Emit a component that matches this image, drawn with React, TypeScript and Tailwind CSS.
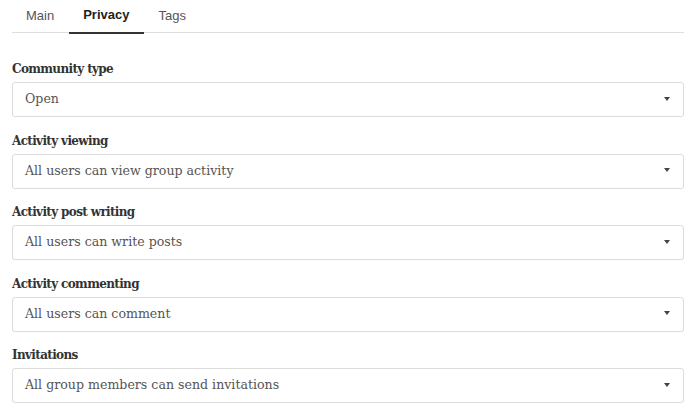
import React from "react";

const serif = { fontFamily: '"DejaVu Serif", "Liberation Serif", serif' };

const fields = [
  { label: "Community type", value: "Open" },
  { label: "Activity viewing", value: "All users can view group activity" },
  { label: "Activity post writing", value: "All users can write posts" },
  { label: "Activity commenting", value: "All users can comment" },
  { label: "Invitations", value: "All group members can send invitations" },
];

export default function App() {
  return (
    <div className="w-[697px] h-[412px] bg-white pl-3 pr-[13px] overflow-hidden">
      <div
        className="flex h-[33px] border-b border-[#dedede] text-[13px]"
        style={{ fontFamily: '"Liberation Sans", Arial, sans-serif' }}
      >
        <div className="h-[32px] pl-[14px] pr-[15px] flex items-center text-[#555]">Main</div>
        <div className="h-[34px] -mb-[2px] pl-[14px] pr-[15px] flex items-center pb-[2px] font-bold text-[#222] border-b-2 border-[#333]">
          Privacy
        </div>
        <div className="h-[32px] pl-[14px] pr-[15px] flex items-center text-[#555]">Tags</div>
      </div>
      <div className="pt-[26px]" style={serif}>
        {fields.map((f) => (
          <div key={f.label} className="mb-[13.5px]">
            <div className="h-[20px] leading-[20px] text-[12px] tracking-[-0.65px] font-bold text-[#333] mb-[3px]">
              {f.label}
            </div>
            <div className="h-[35px] border border-[#dcdcdc] rounded-[3px] flex items-center pl-3 pr-[13px] text-[12.6px] text-[#555]">
              <span className="flex-1">{f.value}</span>
              <span className="w-0 h-0 border-l-[3px] border-r-[3px] border-t-[4px] border-l-transparent border-r-transparent border-t-[#444] -mt-[2px]" />
            </div>
          </div>
        ))}
      </div>
    </div>
  );
}
